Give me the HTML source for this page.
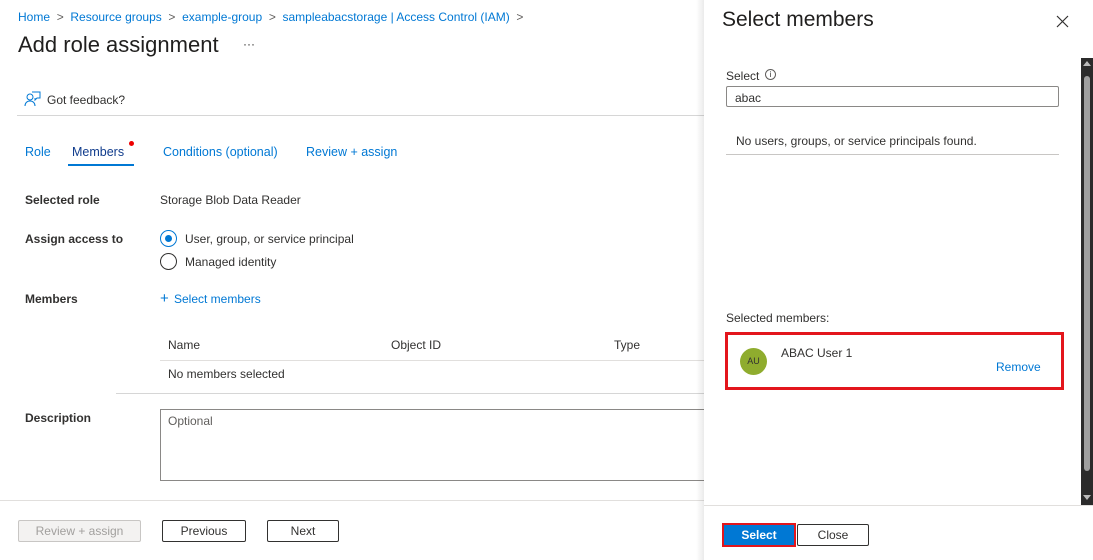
<!DOCTYPE html>
<html><head><meta charset="utf-8"><style>
*{margin:0;padding:0;box-sizing:border-box}
body{width:1093px;height:560px;position:relative;overflow:hidden;background:#fff;font-family:"Liberation Sans",sans-serif;font-size:12px;color:#323130}
.a{position:absolute;white-space:nowrap}
.blue{color:#0078d4}
.lbl{font-weight:bold;color:#323130}
.btn{position:absolute;border:1px solid #323130;background:#fff;text-align:center;font-size:12px;color:#323130;border-radius:2px}
</style></head><body>
<div class="a blue" style="left:18px;top:10px">Home &nbsp;<span style="color:#605e5c">&gt;</span>&nbsp; Resource groups &nbsp;<span style="color:#605e5c">&gt;</span>&nbsp; example-group &nbsp;<span style="color:#605e5c">&gt;</span>&nbsp; sampleabacstorage | Access Control (IAM) &nbsp;<span style="color:#605e5c">&gt;</span></div>
<div class="a" style="left:18px;top:32px;font-size:22px;color:#201f1e">Add role assignment</div>
<div class="a" style="left:243px;top:37px;font-size:12px">···</div>
<svg class="a" style="left:24px;top:91px" width="17" height="16" viewBox="0 0 17 16" fill="none" stroke="#0078d4" stroke-width="1"><circle cx="6" cy="6" r="3"/><path d="M1 15c0-3 2-5 5-5s5 2 5 5"/><path d="M8 1h8v6h-3l-2 2v-2"/></svg>
<div class="a" style="left:47px;top:93px">Got feedback?</div>
<div class="a" style="left:17px;top:115px;width:700px;height:1px;background:#d6d6d6"></div>
<div class="a blue" style="left:25px;top:145px;font-size:12.5px">Role</div>
<div class="a" style="left:72px;top:145px;font-size:12.5px;color:#0f3b8c">Members</div>
<div class="a" style="left:129px;top:141px;width:5px;height:5px;border-radius:50%;background:#e00"></div>
<div class="a" style="left:68px;top:164px;width:66px;height:2px;background:#0078d4"></div>
<div class="a blue" style="left:163px;top:145px;font-size:12.5px">Conditions (optional)</div>
<div class="a blue" style="left:306px;top:145px;font-size:12.5px">Review + assign</div>
<div class="a lbl" style="left:25px;top:193px">Selected role</div>
<div class="a" style="left:160px;top:193px">Storage Blob Data Reader</div>
<div class="a lbl" style="left:25px;top:232px">Assign access to</div>
<div class="a" style="left:160px;top:230px;width:17px;height:17px;border:1px solid #0078d4;border-radius:50%"></div>
<div class="a" style="left:165px;top:235px;width:7px;height:7px;background:#0078d4;border-radius:50%"></div>
<div class="a" style="left:185px;top:232px">User, group, or service principal</div>
<div class="a" style="left:160px;top:253px;width:17px;height:17px;border:1px solid #323130;border-radius:50%"></div>
<div class="a" style="left:185px;top:255px">Managed identity</div>
<div class="a lbl" style="left:25px;top:292px">Members</div>
<div class="a blue" style="left:160px;top:290px;font-size:15px;font-weight:200">+</div>
<div class="a blue" style="left:174px;top:292px">Select members</div>
<div class="a" style="left:168px;top:338px">Name</div>
<div class="a" style="left:391px;top:338px">Object ID</div>
<div class="a" style="left:614px;top:338px">Type</div>
<div class="a" style="left:160px;top:360px;width:550px;height:1px;background:#e1dfdd"></div>
<div class="a" style="left:168px;top:367px">No members selected</div>
<div class="a" style="left:116px;top:393px;width:600px;height:1px;background:#d6d6d6"></div>
<div class="a lbl" style="left:25px;top:411px">Description</div>
<div class="a" style="left:160px;top:409px;width:560px;height:72px;border:1px solid #8a8886"></div>
<div class="a" style="left:168px;top:414px;color:#605e5c">Optional</div>
<div class="a" style="left:0;top:500px;width:710px;height:1px;background:#e1dfdd"></div>
<div class="btn" style="left:18px;top:520px;width:123px;height:22px;line-height:20px;border-color:#c8c6c4;background:#f3f2f1;color:#a19f9d">Review + assign</div>
<div class="btn" style="left:162px;top:520px;width:84px;height:22px;line-height:20px">Previous</div>
<div class="btn" style="left:267px;top:520px;width:72px;height:22px;line-height:20px">Next</div>
<!-- panel -->
<div class="a" style="left:696px;top:0;width:8px;height:560px;background:linear-gradient(to right,rgba(0,0,0,0),rgba(0,0,0,0.08))"></div>
<div class="a" style="left:704px;top:0;width:389px;height:560px;background:#fff"></div>
<div class="a" style="left:722px;top:8px;font-size:21px;color:#201f1e">Select members</div>
<svg class="a" style="left:1056px;top:15px" width="13" height="13" viewBox="0 0 13 13" stroke="#323130" stroke-width="1.2"><path d="M1 1l11 11M12 1L1 12"/></svg>
<div class="a" style="left:726px;top:69px">Select</div>
<div class="a" style="left:765px;top:69px;width:11px;height:11px;border:1px solid #605e5c;border-radius:50%;font-size:8px;line-height:9px;text-align:center">i</div>
<div class="a" style="left:726px;top:86px;width:333px;height:21px;border:1px solid #8a8886;border-radius:2px"></div>
<div class="a" style="left:735px;top:91px">abac</div>
<div class="a" style="left:736px;top:134px">No users, groups, or service principals found.</div>
<div class="a" style="left:726px;top:154px;width:333px;height:1px;background:#c8c6c4"></div>
<div class="a" style="left:726px;top:311px">Selected members:</div>
<div class="a" style="left:725px;top:332px;width:339px;height:58px;border:3px solid #e3161c"></div>
<div class="a" style="left:740px;top:348px;width:27px;height:27px;border-radius:50%;background:#8fac2e;font-size:9px;line-height:27px;text-align:center">AU</div>
<div class="a" style="left:781px;top:346px">ABAC User 1</div>
<div class="a blue" style="left:996px;top:360px">Remove</div>
<div class="a" style="left:1081px;top:58px;width:12px;height:447px;background:#2b2b2b"></div>
<div class="a" style="left:1084px;top:76px;width:6px;height:395px;background:#9f9f9f;border-radius:3px"></div>
<div class="a" style="left:1083px;top:61px;width:0;height:0;border-left:4px solid transparent;border-right:4px solid transparent;border-bottom:5px solid #bbb"></div>
<div class="a" style="left:1083px;top:495px;width:0;height:0;border-left:4px solid transparent;border-right:4px solid transparent;border-top:5px solid #bbb"></div>
<div class="a" style="left:704px;top:505px;width:389px;height:1px;background:#e1dfdd"></div>
<div class="a" style="left:722px;top:523px;width:74px;height:24px;border:2px solid #e3161c;background:#0078d4;color:#fff;font-weight:bold;text-align:center;line-height:20px">Select</div>
<div class="btn" style="left:797px;top:524px;width:72px;height:22px;line-height:20px">Close</div>
</body></html>
